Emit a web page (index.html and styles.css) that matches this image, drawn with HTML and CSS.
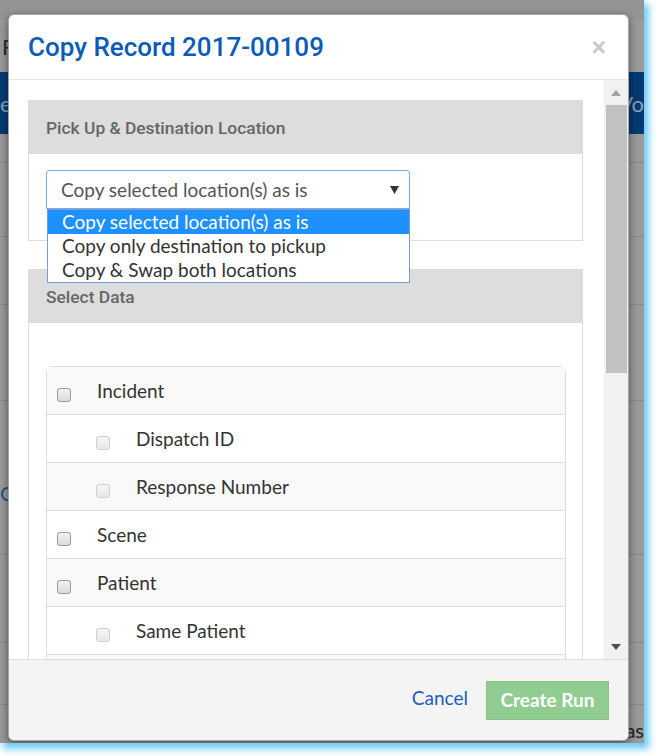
FILE: index.html
```html
<!DOCTYPE html>
<html>
<head>
<meta charset="utf-8">
<link rel="stylesheet" href="styles.css">
</head>
<body>
<div class="screen">
  <div class="bgpage">
    <div class="bg-top"><span class="bg-t1">Re</span></div>
    <div class="bg-nav"><span>e</span><span>Vo</span></div>
    <div class="bg-row r1"></div>
    <div class="bg-row r2"></div>
    <div class="bg-row r3"></div>
    <div class="bg-row r4"></div>
    <div class="bg-row r5"><span class="bg-link">Cr</span></div>
    <div class="bg-row r6"></div>
    <div class="bg-row r7"></div>
    <div class="bg-row r8"><span></span><span class="bg-dark">as</span></div>
  </div>

  <div class="modal">
    <div class="modal-header">
      <h4 class="modal-title">Copy Record 2017-00109</h4>
      <span class="close">×</span>
    </div>
    <div class="modal-body">
      <div class="body-content">
        <div class="panel">
          <div class="panel-heading">Pick Up &amp; Destination Location</div>
          <div class="panel-body p1">
            <div class="select-wrap">
              <div class="select">
                <span>Copy selected location(s) as is</span>
                <svg class="caret" width="9" height="8" viewBox="0 0 9 8"><path d="M0 0H9L4.5 8Z" fill="#333"/></svg>
              </div>
              <ul class="dropdown">
                <li class="opt active">Copy selected location(s) as is</li>
                <li class="opt">Copy only destination to pickup</li>
                <li class="opt">Copy &amp; Swap both locations</li>
              </ul>
            </div>
          </div>
        </div>
        <div class="panel panel2">
          <div class="panel-heading">Select Data</div>
          <div class="panel-body p2">
            <div class="list">
              <div class="row"><span class="cb"></span><span>Incident</span></div>
              <div class="row child"><span class="cb dis"></span><span>Dispatch ID</span></div>
              <div class="row child"><span class="cb dis"></span><span>Response Number</span></div>
              <div class="row"><span class="cb"></span><span>Scene</span></div>
              <div class="row"><span class="cb"></span><span>Patient</span></div>
              <div class="row child"><span class="cb dis"></span><span>Same Patient</span></div>
              <div class="row child"></div>
            </div>
          </div>
        </div>
      </div>
      <div class="scrollbar">
        <div class="sb-btn"><svg width="10" height="6" viewBox="0 0 10 6"><path d="M0 6H10L5 0Z" fill="#a3a3a3"/></svg></div>
        <div class="sb-thumb"></div>
        <div class="sb-space"></div>
        <div class="sb-btn"><svg width="10" height="6" viewBox="0 0 10 6"><path d="M0 0H10L5 6Z" fill="#505050"/></svg></div>
      </div>
    </div>
    <div class="modal-footer">
      <a class="cancel">Cancel</a>
      <button class="btn-create">Create Run</button>
    </div>
  </div>
</div>
</body>
</html>
```

FILE: styles.css
```css
html, body {
  margin: 0;
  background: #ffffff;
}
body {
  height: 756px;
  overflow: hidden;
}

.screen {
  position: relative;
  width: 644px;
  height: 743px;
  background: #9a9a9a;
  box-shadow: 4px 5px 7px 1px #6fcdf5;
  overflow: hidden;
  font-family: Lato, "Liberation Sans", sans-serif;
}

/* dimmed background page */
.bgpage {
  display: flex;
  flex-direction: column;
  height: 100%;
}
.bg-top {
  height: 72px;
  box-sizing: border-box;
  border-top: 20px solid #949494;
  display: flex;
  align-items: center;
  padding-left: 2px;
}
.bg-t1 {
  font-size: 22px;
  color: #2a2a2a;
}
.bg-nav {
  height: 62px;
  background: #053a74;
  display: flex;
  justify-content: space-between;
  align-items: center;
  font-size: 22px;
  color: #8ea3bf;
}
.bg-row {
  box-sizing: border-box;
  border-bottom: 1px solid #8a8a8a;
  flex: none;
}
.r1 { height: 29px; }
.r2 { height: 74px; }
.r3 { height: 68px; }
.r4 { height: 96px; }
.r5 { height: 154px; padding-top: 80px; }
.r6 { height: 88px; }
.r7 { height: 62px; }
.r8 {
  flex: 1;
  border-bottom: none;
  display: flex;
  justify-content: space-between;
  align-items: flex-end;
}
.bg-link {
  font-size: 20px;
  color: #1d4f86;
}
.bg-dark {
  font-size: 20px;
  color: #222;
  line-height: 26px;
}

/* modal */
.modal {
  position: absolute;
  left: 8px;
  top: 14px;
  width: 621px;
  height: 727px;
  box-sizing: border-box;
  border: 1px solid rgba(0, 0, 0, 0.35);
  border-radius: 6px;
  background: #fff;
  box-shadow: 0 3px 9px rgba(0, 0, 0, 0.5);
  display: flex;
  flex-direction: column;
  overflow: hidden;
}

.modal-header {
  height: 65px;
  flex: none;
  box-sizing: border-box;
  border-bottom: 1px solid #e5e5e5;
  display: flex;
  align-items: center;
  justify-content: space-between;
  padding: 0 22px 0 19px;
}
.modal-title {
  margin: 0;
  font-family: Roboto, sans-serif;
  font-weight: 500;
  font-size: 26px;
  line-height: 1;
  color: #0a5cb8;
}
.close {
  font-family: "Liberation Sans", sans-serif;
  font-weight: 700;
  font-size: 25px;
  line-height: 1;
  color: #c8c8c8;
}

.modal-body {
  flex: 1;
  display: flex;
  min-height: 0;
}
.body-content {
  flex: 1;
  padding: 20px 21px 0 19px;
  overflow: hidden;
}

.panel {
  border: 1px solid #ddd;
  background: #fff;
}
.panel-heading {
  height: 53px;
  background: #dddddd;
  display: flex;
  align-items: center;
  padding-left: 17px;
  font-family: Roboto, sans-serif;
  font-weight: 500;
  font-size: 17.4px;
  color: #666;
}
.p1 {
  padding: 16px 16px 31px 17px;
}
.select-wrap {
  position: relative;
  width: 364px;
}
.select {
  height: 39px;
  box-sizing: border-box;
  border: 1px solid #72a9e6;
  border-radius: 3px 3px 0 0;
  display: flex;
  align-items: center;
  justify-content: space-between;
  padding: 0 10px 0 14px;
  color: #555;
  font-size: 19px;
}
.dropdown {
  position: absolute;
  z-index: 10;
  top: 39px;
  left: 1px;
  width: 363px;
  box-sizing: border-box;
  margin: 0;
  padding: 0;
  list-style: none;
  background: #fff;
  border: 1px solid #7d9bd0;
}
.opt {
  height: 24px;
  line-height: 24px;
  padding-left: 14px;
  font-size: 19px;
  color: #333;
}
.opt.active {
  background: #1e90ff;
  color: #fff;
}

.panel2 {
  margin-top: 28px;
}
.p2 {
  padding: 43px 16px 0 17px;
}
.list {
  border: 1px solid #ddd;
  border-radius: 6px 6px 0 0;
}
.row {
  height: 48px;
  box-sizing: border-box;
  border-bottom: 1px solid #ddd;
  display: flex;
  align-items: center;
  padding-left: 10px;
  font-size: 19px;
  color: #333;
}
.row:nth-child(odd) {
  background: #f9f9f9;
}
.row.child {
  padding-left: 49px;
}
.cb {
  width: 14px;
  height: 14px;
  box-sizing: border-box;
  margin: 8px 26px 0 0;
  border: 1px solid #9a9a9a;
  border-radius: 3px;
  background: linear-gradient(#f2f2f2, #dadada);
  flex: none;
}
.cb.dis {
  border-color: #cfcfcf;
  background: linear-gradient(#f4f4f4, #e8e8e8);
}

.scrollbar {
  width: 24px;
  flex: none;
  background: #f1f1f1;
  display: flex;
  flex-direction: column;
}
.sb-btn {
  height: 25px;
  display: flex;
  align-items: center;
  justify-content: center;
}
.sb-thumb {
  width: 21px;
  height: 268px;
  margin-left: 2px;
  background: #c1c1c1;
}
.sb-space {
  flex: 1;
}

.modal-footer {
  height: 81px;
  flex: none;
  box-sizing: border-box;
  border-top: 1px solid #ddd;
  background: #f4f4f4;
  display: flex;
  justify-content: flex-end;
  align-items: center;
  gap: 18px;
  padding-right: 19px;
}
.cancel {
  font-size: 19px;
  color: #1b5fbf;
  margin-bottom: 5px;
}
.btn-create {
  height: 39px;
  width: 123px;
  padding: 0 0 2px;
  border: 1px solid #88c688;
  background: #91cd91;
  color: #fff;
  font-family: Lato, sans-serif;
  font-weight: 700;
  font-size: 19px;
}
```
